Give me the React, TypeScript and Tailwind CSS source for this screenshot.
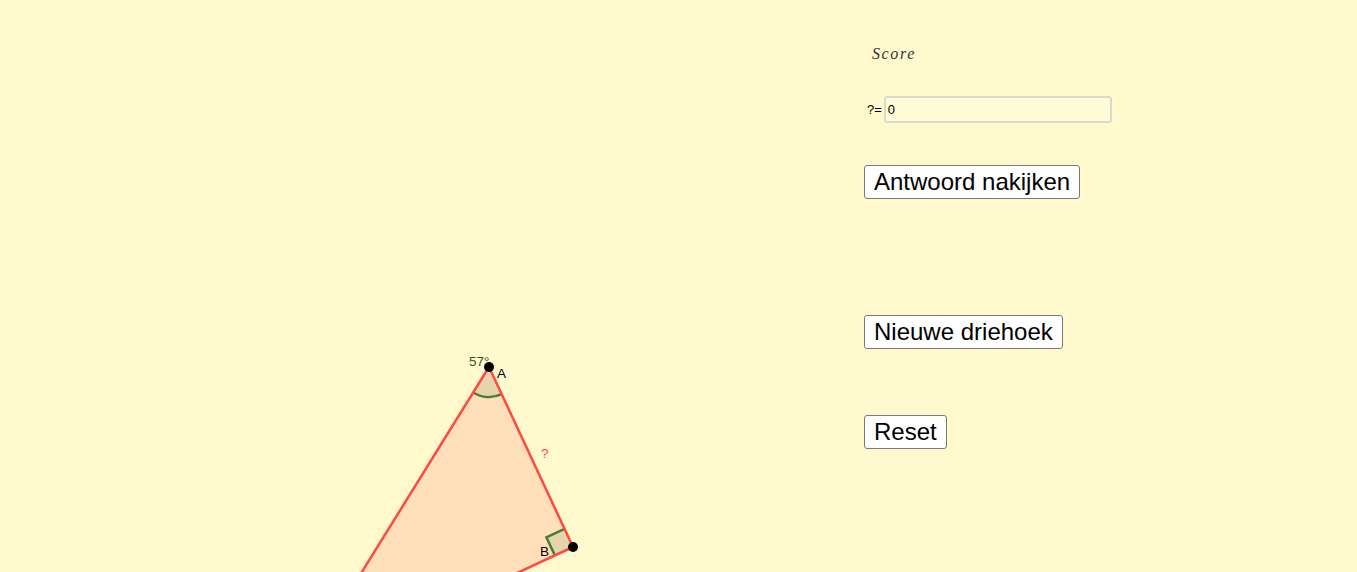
import React from 'react';

// Triangle geometry (page coordinates of the drawing pane)
const A = { x: 489, y: 367 };
const B = { x: 573, y: 547 };
const C = { x: 298, y: 675 };

function AppletButton({ label }: { label: string }) {
  return (
    <button
      className="h-[34px] rounded-[3px] border border-[#7a7a7a] bg-white px-[9px] text-[24px] leading-none text-black"
      style={{ fontFamily: '"Liberation Sans", Arial, sans-serif' }}
    >
      {label}
    </button>
  );
}

function Drawing() {
  return (
    <svg width="850" height="572" viewBox="0 0 850 572" className="block shrink-0">
      {/* triangle fill */}
      <polygon points={`${A.x},${A.y} ${B.x},${B.y} ${C.x},${C.y}`} fill="#ffe0ba" />
      {/* angle sector at A */}
      <path d="M489 367 L473.2 392.5 A30 30 0 0 0 501.7 394.2 Z" fill="#e6d4ab" />
      <path d="M473.2 392.5 A30 30 0 0 0 501.7 394.2" fill="none" stroke="#4a7d33" strokeWidth="2.5" />
      {/* right angle at B */}
      <polygon points="573,547 564.5,528.9 546.4,537.4 554.9,555.5" fill="#e6d4ab" />
      <polyline points="564.5,528.9 546.4,537.4 554.9,555.5" fill="none" stroke="#4a7d33" strokeWidth="2.5" />
      {/* sides */}
      <g stroke="#ff4a43" strokeWidth="2.5" fill="none" strokeLinecap="round">
        <line x1={A.x} y1={A.y} x2={B.x} y2={B.y} />
        <line x1={B.x} y1={B.y} x2={C.x} y2={C.y} />
        <line x1={A.x} y1={A.y} x2={C.x} y2={C.y} />
      </g>
      {/* points */}
      <circle cx={A.x} cy={A.y} r="5" fill="#000" />
      <circle cx={B.x} cy={B.y} r="5" fill="#000" />
      <g style={{ fontFamily: '"Liberation Sans", Arial, sans-serif' }} fontSize="13.5">
        <text x="469" y="366" fill="#2f5a1e">57°</text>
        <text x="497" y="378" fill="#000">A</text>
        <text x="541" y="458" fill="#ff4a43">?</text>
        <text x="540" y="556" fill="#000">B</text>
      </g>
    </svg>
  );
}

export default function App() {
  return (
    <div
      className="flex h-[572px] w-full overflow-hidden bg-[#fff9cd]"
      style={{ fontFamily: '"Liberation Sans", Arial, sans-serif' }}
    >
      <Drawing />
      <div className="flex flex-col items-start pl-[14px] pt-[44px]">
        <div
          className="pl-[8px] text-[16px] italic leading-[20px] tracking-[1.6px] text-[#333]"
          style={{ fontFamily: '"Liberation Serif", "Times New Roman", serif' }}
        >
          Score
        </div>
        <div className="mt-[32px] flex items-center">
          <span className="pl-[3px] pr-[2px] text-[13px] text-black">?=</span>
          <div className="flex h-[27px] w-[228px] items-center rounded-[3px] border-2 border-[#dcdad0] bg-[#fffbd6] pl-[2px] text-[13px] text-black">
            0
          </div>
        </div>
        <div className="mt-[42px]">
          <AppletButton label="Antwoord nakijken" />
        </div>
        <div className="mt-[116px]">
          <AppletButton label="Nieuwe driehoek" />
        </div>
        <div className="mt-[66px]">
          <AppletButton label="Reset" />
        </div>
      </div>
    </div>
  );
}
